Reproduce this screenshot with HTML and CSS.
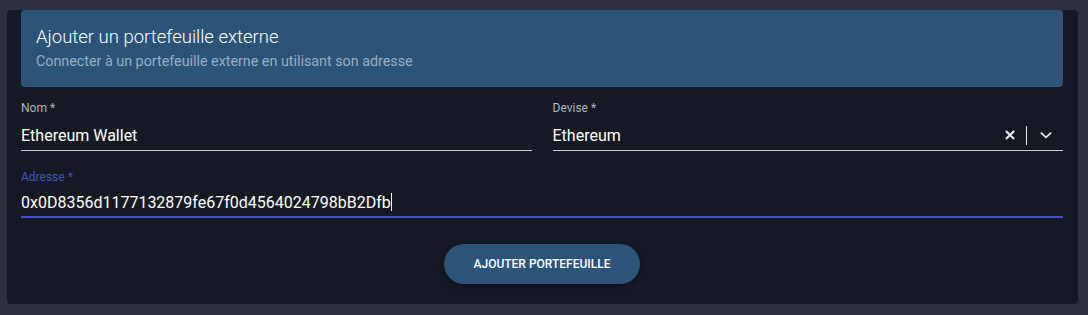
FILE: index.html
```html
<!DOCTYPE html>
<html lang="fr">
<head>
    <meta charset="UTF-8">
    <meta name="viewport" content="width=device-width, initial-scale=1.0">
    <title>Ajouter un portefeuille externe</title>
    <link rel="stylesheet" href="styles.css">
</head>
<body>
    <div class="card">
        <div class="card-header">
            <div class="card-title">Ajouter un portefeuille externe</div>
            <div class="card-subtitle">Connecter à un portefeuille externe en utilisant son adresse</div>
        </div>

        <form class="wallet-form">
            <div class="row">
                <div class="field">
                    <label for="name">Nom *</label>
                    <div class="control">
                        <input type="text" id="name" value="Ethereum Wallet">
                    </div>
                </div>
                <div class="field">
                    <label for="currency">Devise *</label>
                    <div class="control">
                        <input type="text" id="currency" value="Ethereum" readonly>
                        <span class="select-actions">
                            <svg class="clear-icon" width="14" height="14" viewBox="0 0 24 24">
                                <path d="M5 5 L19 19 M19 5 L5 19" stroke="#e8e8e8" stroke-width="3.6" fill="none"/>
                            </svg>
                            <span class="divider"></span>
                            <svg class="chevron" width="14" height="14" viewBox="0 0 24 24">
                                <path d="M3 8 L12 16 L21 8" stroke="#e8e8e8" stroke-width="3" fill="none"/>
                            </svg>
                        </span>
                    </div>
                </div>
            </div>

            <div class="field focused">
                <label for="address">Adresse *</label>
                <div class="control">
                    <span class="address-value" id="address">0x0D8356d1177132879fe67f0d4564024798bB2Dfb<span class="caret"></span></span>
                </div>
            </div>

            <div class="actions">
                <button type="button" class="add-btn">Ajouter portefeuille</button>
            </div>
        </form>
    </div>
</body>
</html>
```

FILE: styles.css
```css
body {
    margin: 0;
    padding: 30px 10px 11px 7px;
    background-color: #2f303f;
    font-family: 'Roboto', 'Liberation Sans', sans-serif;
    color: #ecf0f1;
}

.card {
    background: #151923;
    border-radius: 4px;
    padding: 0 15px 20px 14px;
}

.card-header {
    margin-top: -20px;
    height: 77px;
    box-sizing: border-box;
    padding: 16px 15px 0 15px;
    background: #2c5479;
    border-radius: 4px;
}

.card-title {
    font-size: 18.5px;
    font-weight: 300;
    color: #ffffff;
    line-height: 22px;
}

.card-subtitle {
    margin-top: 4px;
    font-size: 14.3px;
    color: #98adc3;
    line-height: 18px;
}

.wallet-form {
    padding-top: 13px;
}

.row {
    display: grid;
    grid-template-columns: 1fr 1fr;
    gap: 21px;
}

.field label {
    display: block;
    font-size: 12px;
    line-height: 16px;
    color: #b4b6bb;
}

.control {
    display: flex;
    align-items: center;
    height: 30px;
    margin-top: 4px;
    border-bottom: 1px solid #c8c9cc;
}

.control input {
    flex: 1;
    min-width: 0;
    background: transparent;
    border: none;
    outline: none;
    padding: 0;
    font-family: inherit;
    font-size: 16px;
    color: #ffffff;
}

.select-actions {
    display: flex;
    align-items: center;
    padding-right: 10px;
}

.clear-icon {
    margin-right: 9px;
}

.divider {
    width: 1px;
    height: 19px;
    background: #e8e8e8;
}

.chevron {
    margin-left: 12px;
}

.focused {
    margin-top: 18px;
}

.focused label {
    color: #4353c0;
}

.focused .control {
    height: 27px;
    border-bottom: 2px solid #4353c0;
}

.address-value {
    font-size: 16px;
    color: #ffffff;
}

.caret {
    display: inline-block;
    width: 1px;
    height: 18px;
    background: #ffffff;
    vertical-align: -3px;
}

.actions {
    display: flex;
    justify-content: center;
    margin-top: 26px;
}

.add-btn {
    width: 196px;
    height: 40px;
    border: none;
    border-radius: 20px;
    background: #2c5479;
    color: #ffffff;
    font-family: inherit;
    font-size: 12px;
    font-weight: 500;
    text-transform: uppercase;
    box-shadow: 0 2px 4px rgba(0, 0, 0, 0.4);
    cursor: pointer;
}
```
